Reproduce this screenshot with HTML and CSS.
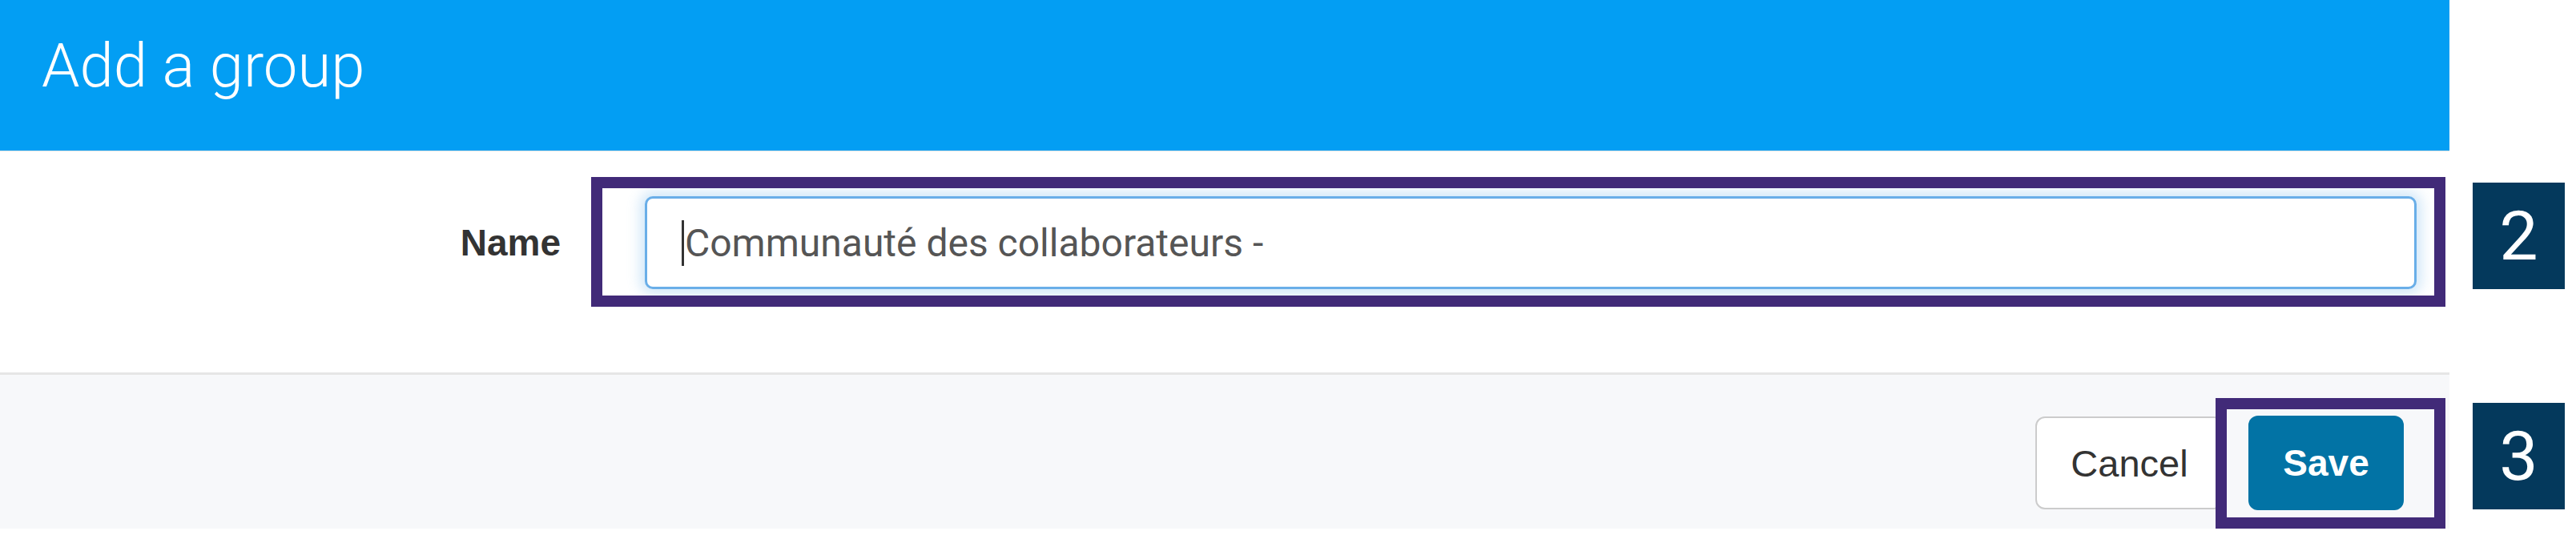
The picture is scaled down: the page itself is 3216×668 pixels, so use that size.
FILE: index.html
```html
<!DOCTYPE html>
<html lang="en">
<head>
<meta charset="utf-8">
<title>Add a group</title>
<link rel="stylesheet" href="styles.css">
</head>
<body>
<div class="page">
  <div class="dialog">
    <div class="dialog-header">
      <h1 class="dialog-title">Add a group</h1>
    </div>
    <div class="dialog-body">
      <div class="form-row">
        <label class="form-label">Name</label>
        <div class="text-input" role="textbox"><span class="caret"></span>Communauté des collaborateurs -</div>
      </div>
    </div>
    <div class="dialog-footer">
      <button class="btn btn-cancel">Cancel</button>
      <button class="btn btn-save">Save</button>
    </div>
  </div>
  <div class="markers">
    <div class="marker">2</div>
    <div class="marker">3</div>
  </div>
  <div class="highlight highlight-input"></div>
  <div class="highlight highlight-save"></div>
</div>
</body>
</html>
```
FILE: styles.css
```css
html, body {
  margin: 0;
  padding: 0;
  background: #ffffff;
}

.page {
  position: relative;
  width: 3216px;
  height: 668px;
  display: grid;
  grid-template-columns: 3058px 1fr;
  align-items: start;
}

.dialog {
  display: flex;
  flex-direction: column;
}

.dialog-header {
  box-sizing: border-box;
  height: 189px;
  background: #039ef3;
  border-bottom: 1px solid #e6e3e3;
  padding: 44px 0 0 52px;
}

.dialog-title {
  margin: 0;
  font-family: Roboto, "Liberation Sans", sans-serif;
  font-weight: 300;
  font-size: 76px;
  line-height: 1;
  color: #ffffff;
}

.dialog-body {
  box-sizing: border-box;
  height: 276px;
  padding: 56px 41px 0 0;
}

.form-row {
  display: grid;
  grid-template-columns: 700px 1fr;
  column-gap: 105px;
  align-items: center;
}

.form-label {
  text-align: right;
  font-family: "Liberation Sans", Arial, sans-serif;
  font-weight: 700;
  font-size: 46px;
  color: #333333;
}

.text-input {
  box-sizing: border-box;
  height: 116px;
  border: 3px solid #69aee8;
  border-radius: 10px;
  background: #ffffff;
  box-shadow: 0 0 16px 6px rgba(102, 175, 233, 0.3);
  display: flex;
  align-items: center;
  padding-left: 43px;
  font-family: Roboto, "Liberation Sans", sans-serif;
  font-size: 48px;
  color: #555555;
  white-space: nowrap;
}

.caret {
  width: 3px;
  height: 57px;
  background: #333333;
  margin-right: 1px;
}

.dialog-footer {
  box-sizing: border-box;
  height: 195px;
  background: #f7f8fa;
  border-top: 3px solid #e6e6e6;
  display: flex;
  justify-content: flex-end;
  align-items: flex-start;
  gap: 31px;
  padding: 51px 57px 0 0;
}

.btn {
  box-sizing: border-box;
  height: 118px;
  border-radius: 12px;
  font-size: 47px;
  padding: 0;
  cursor: pointer;
}

.btn-cancel {
  width: 235px;
  margin-top: 1px;
  height: 116px;
  background: #ffffff;
  border: 2px solid #cccccc;
  color: #333333;
  font-family: "Liberation Sans", Arial, sans-serif;
  font-weight: 400;
}

.btn-save {
  width: 194px;
  background: #0273a5;
  border: none;
  color: #ffffff;
  font-family: "Liberation Sans", Arial, sans-serif;
  font-weight: 700;
  font-size: 46px;
}

.markers {
  display: flex;
  flex-direction: column;
  gap: 142px;
  padding: 228px 0 0 29px;
}

.marker {
  width: 115px;
  height: 133px;
  background: #04395c;
  color: #ffffff;
  font-family: Roboto, "Liberation Sans", sans-serif;
  font-weight: 400;
  font-size: 86px;
  display: flex;
  align-items: center;
  justify-content: center;
  line-height: 1;
}

.highlight {
  position: absolute;
  box-sizing: border-box;
  border: 14px solid #412a78;
}

.highlight-input {
  left: 738px;
  top: 221px;
  width: 2315px;
  height: 162px;
}

.highlight-save {
  left: 2766px;
  top: 497px;
  width: 287px;
  height: 163px;
}
```
